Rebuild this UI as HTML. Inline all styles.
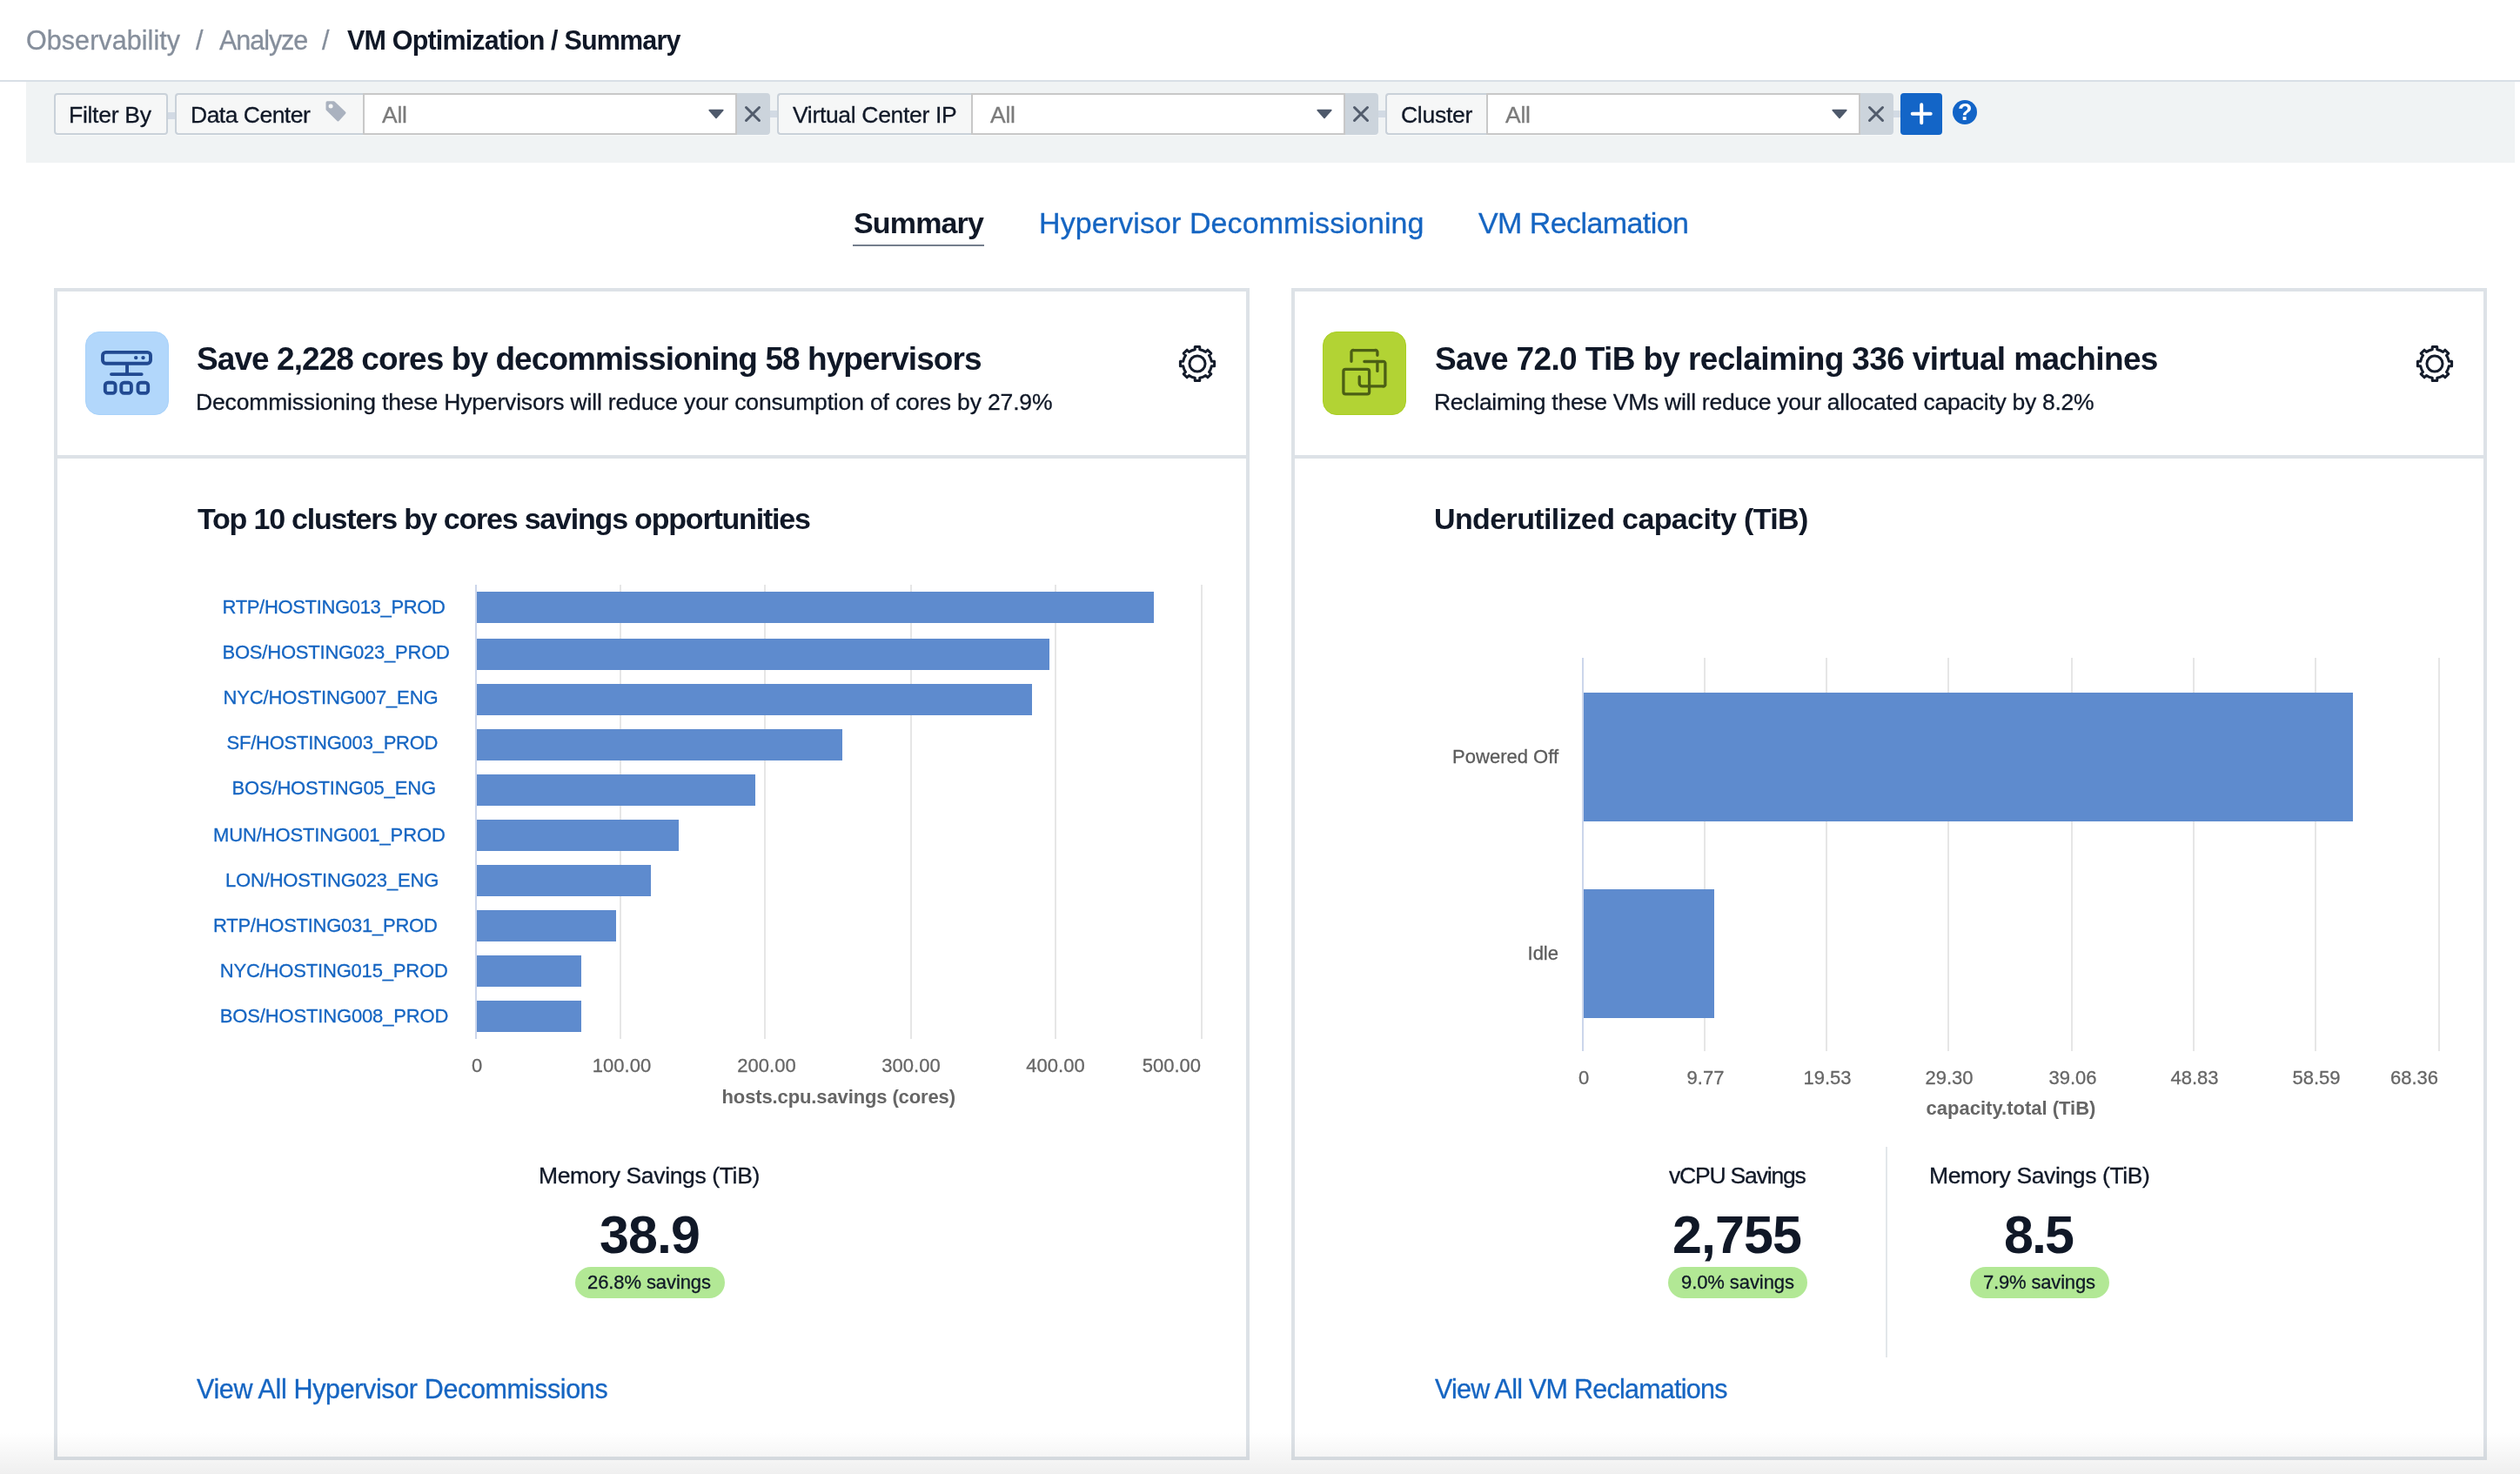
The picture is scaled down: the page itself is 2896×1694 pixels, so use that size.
<!DOCTYPE html>
<html lang="en">
<head>
<meta charset="utf-8">
<title>VM Optimization / Summary</title>
<style>
html,body{margin:0;padding:0;background:#fff;}
body{width:2896px;height:1694px;overflow:hidden;font-family:"Liberation Sans",Arial,Helvetica,sans-serif;}
#app{position:relative;width:2896px;height:1694px;overflow:hidden;background:#fff;}
.t{will-change:transform;position:absolute;white-space:nowrap;margin:0;font-weight:400;text-decoration:none;}
.abs{position:absolute;box-sizing:border-box;}
.topline{left:0;top:92px;width:2896px;height:2px;background:#d8dfe6;}
.filterbar{left:30px;top:94px;width:2860px;height:93px;background:#f0f3f4;}
.lbl{top:107px;height:48px;background:#f6f7f7;border:2px solid #c9d1d9;border-radius:4px;box-shadow:0 1px 0 rgba(255,255,255,.55);}
.lbl.j{border-right:none;border-radius:4px 0 0 4px;}
.sel{box-shadow:0 1px 0 rgba(255,255,255,.55);top:107px;height:48px;background:#fff;border:2px solid #c8c8c8;}
.xbtn{top:107px;height:48px;background:#ccd4dc;border-radius:0 4px 4px 0;box-shadow:0 1px 0 rgba(255,255,255,.55);}
.conn{top:127px;height:8px;background:#d2dae4;}
.plus{left:2184px;top:107px;width:48px;height:48px;background:#1365c7;border-radius:4px;}
.help{left:2244px;top:115px;width:28px;height:28px;border-radius:50%;background:#1264c7;}
.chart{position:absolute;overflow:visible;will-change:transform;}
.ico{position:absolute;overflow:visible;}
.tabline{left:980px;top:281px;width:151px;height:2px;background:#747e8c;}
.panel{top:331px;width:1374px;height:1347px;border:4px solid #dde2e7;background:#fff;}
.psep{height:4px;background:#dde2e7;top:523px;width:1366px;}
.iconbox{top:381px;width:96px;height:96px;border-radius:16px;border:1px solid transparent;}
.badge{top:1456px;height:36px;border-radius:18px;background:#b2e895;}
.vsep{left:2167px;top:1318px;width:2px;height:242px;background:#e3e7ea;}
.shade{left:0;top:1646px;width:2896px;height:48px;background:linear-gradient(to bottom,rgba(0,0,0,0) 0%,rgba(0,0,0,0.062) 100%);pointer-events:none;}
</style>
</head>
<body>
<div id="app">

<header>
  <nav class="breadcrumb">
    <a class="t" style="left:30.3px;top:30.9px;font-size:30.5px;line-height:30.5px;color:#858e9b;-webkit-text-stroke:0.3px;letter-spacing:0.06px;">Observability</a><span class="t" style="left:224.7px;top:30.9px;font-size:30.5px;line-height:30.5px;color:#858e9b;-webkit-text-stroke:0.3px;">/</span><a class="t" style="left:251.7px;top:30.9px;font-size:30.5px;line-height:30.5px;color:#858e9b;-webkit-text-stroke:0.3px;letter-spacing:-1.04px;">Analyze</a><span class="t" style="left:370.0px;top:30.9px;font-size:30.5px;line-height:30.5px;color:#858e9b;-webkit-text-stroke:0.3px;">/</span><h1 class="t" style="left:399.2px;top:30.9px;font-size:30.5px;line-height:30.5px;color:#101827;font-weight:700;letter-spacing:-0.83px;">VM Optimization / Summary</h1>
  </nav>
  <div class="abs topline"></div>
</header>

<section class="filters">
  <div class="abs filterbar"></div>

  <div class="abs lbl" style="left:62px;width:131px"></div>
  <span class="t" style="left:79.3px;top:118.8px;font-size:26.5px;line-height:26.5px;color:#101827;-webkit-text-stroke:0.3px;letter-spacing:-0.28px;">Filter By</span>
  <div class="abs conn" style="left:193px;width:8px;top:129px"></div>

  <div class="abs lbl j" style="left:201px;width:217px"></div>
  <span class="t" style="left:218.8px;top:118.8px;font-size:26.5px;line-height:26.5px;color:#101827;-webkit-text-stroke:0.3px;letter-spacing:-0.51px;">Data Center</span>
  <svg class="ico" style="left:370px;top:112px" width="32" height="32" viewBox="370 112 32 32"><path d="M376.100 117.900L383.560 117.900L395.870 129.680L388.530 137.790L376.100 125.630Z" fill="#aab2bf" stroke="#aab2bf" stroke-width="3.200" stroke-linejoin="round"/><circle cx="380.100" cy="122.100" r="2.500" fill="#f6f7f7"/></svg>
  <div class="abs sel" style="left:417px;width:430px"></div>
  <span class="t" style="left:439.0px;top:118.8px;font-size:26.5px;line-height:26.5px;color:#7b7b7b;-webkit-text-stroke:0.3px;letter-spacing:-0.28px;">All</span>
  <svg class="ico" style="left:813px;top:124px" width="20" height="14" viewBox="0 0 20 14"><path d="M2.2 2.6h15.6L10 11.4z" fill="#4e596b" stroke="#4e596b" stroke-width="1.6" stroke-linejoin="round"/></svg>
  <div class="abs xbtn" style="left:847px;width:38px"></div>
  <svg class="ico" style="left:855px;top:121px" width="20" height="20" viewBox="0 0 20 20"><path d="M2.5 2.5l15 15M17.5 2.5l-15 15" stroke="#515b6b" stroke-width="3" stroke-linecap="round" fill="none"/></svg>
  <div class="abs conn" style="left:885px;width:9px"></div>

  <div class="abs lbl j" style="left:893px;width:225px"></div>
  <span class="t" style="left:910.8px;top:118.8px;font-size:26.5px;line-height:26.5px;color:#101827;-webkit-text-stroke:0.3px;letter-spacing:-0.33px;">Virtual Center IP</span>
  <div class="abs sel" style="left:1116px;width:430px"></div>
  <span class="t" style="left:1138.3px;top:118.8px;font-size:26.5px;line-height:26.5px;color:#7b7b7b;-webkit-text-stroke:0.3px;letter-spacing:-0.28px;">All</span>
  <svg class="ico" style="left:1512px;top:124px" width="20" height="14" viewBox="0 0 20 14"><path d="M2.2 2.6h15.6L10 11.4z" fill="#4e596b" stroke="#4e596b" stroke-width="1.6" stroke-linejoin="round"/></svg>
  <div class="abs xbtn" style="left:1546px;width:38px"></div>
  <svg class="ico" style="left:1554px;top:121px" width="20" height="20" viewBox="0 0 20 20"><path d="M2.5 2.5l15 15M17.5 2.5l-15 15" stroke="#515b6b" stroke-width="3" stroke-linecap="round" fill="none"/></svg>
  <div class="abs conn" style="left:1584px;width:9px"></div>

  <div class="abs lbl j" style="left:1592px;width:118px"></div>
  <span class="t" style="left:1609.5px;top:118.8px;font-size:26.5px;line-height:26.5px;color:#101827;-webkit-text-stroke:0.3px;letter-spacing:-0.27px;">Cluster</span>
  <div class="abs sel" style="left:1708px;width:430px"></div>
  <span class="t" style="left:1730.0px;top:118.8px;font-size:26.5px;line-height:26.5px;color:#7b7b7b;-webkit-text-stroke:0.3px;letter-spacing:-0.28px;">All</span>
  <svg class="ico" style="left:2104px;top:124px" width="20" height="14" viewBox="0 0 20 14"><path d="M2.2 2.6h15.6L10 11.4z" fill="#4e596b" stroke="#4e596b" stroke-width="1.6" stroke-linejoin="round"/></svg>
  <div class="abs xbtn" style="left:2138px;width:38px"></div>
  <svg class="ico" style="left:2146px;top:121px" width="20" height="20" viewBox="0 0 20 20"><path d="M2.5 2.5l15 15M17.5 2.5l-15 15" stroke="#515b6b" stroke-width="3" stroke-linecap="round" fill="none"/></svg>
  <div class="abs conn" style="left:2176px;width:9px"></div>

  <div class="abs plus"></div>
  <svg class="ico" style="left:2194px;top:117px" width="28" height="28" viewBox="0 0 28 28"><path d="M14.2 3.3v21M3.7 13.8h21" stroke="#fff" stroke-width="4" stroke-linecap="round" fill="none"/></svg>
  <div class="abs help"></div>
  <span class="t" style="left:2250.3px;top:115px;font-size:27px;line-height:28px;font-weight:700;color:#fff;">?</span>
</section>

<nav class="tabs">
  <span class="t" style="left:980.5px;top:238.7px;font-size:34px;line-height:34px;color:#101827;font-weight:700;letter-spacing:-0.84px;">Summary</span>
  <div class="abs tabline"></div>
  <a class="t" style="left:1194.0px;top:238.7px;font-size:34px;line-height:34px;color:#1565c2;-webkit-text-stroke:0.3px;letter-spacing:0.09px;">Hypervisor Decommissioning</a>
  <a class="t" style="left:1698.8px;top:238.7px;font-size:34px;line-height:34px;color:#1565c2;-webkit-text-stroke:0.3px;letter-spacing:-0.58px;">VM Reclamation</a>
</nav>

<main>
<section class="abs panel" style="left:62px"></section>
<section class="card-left">
  <div class="abs psep" style="left:66px"></div>
  <div class="abs iconbox" style="left:98px;background:#b2d7fb;border-color:#a8d2fa"></div>
  <svg class="ico" style="left:98px;top:381px" width="96" height="96" viewBox="0 0 96 96" fill="none" stroke="#214991" stroke-width="3.9" stroke-linecap="round" stroke-linejoin="round">
    <rect x="20" y="23.900" width="55" height="12.800" rx="3.600"/>
    <path d="M48.050 38.700V49M30 49.100H64.700"/>
    <rect x="22.800" y="58.700" width="11.800" height="12.200" rx="3.200"/>
    <rect x="41.300" y="58.700" width="11.600" height="12.200" rx="3.200"/>
    <rect x="60.500" y="58.700" width="11.700" height="12.200" rx="3.200"/>
    <path d="M58.200 30.100h.01M66.500 30.100h.01" stroke-width="4.400"/>
  </svg>
  <h2 class="t" style="left:226.0px;top:393.5px;font-size:37px;line-height:37px;color:#101827;font-weight:700;letter-spacing:-0.93px;">Save 2,228 cores by decommissioning 58 hypervisors</h2>
  <p class="t" style="left:225.0px;top:448.8px;font-size:26.5px;line-height:26.5px;color:#101827;-webkit-text-stroke:0.3px;letter-spacing:-0.16px;">Decommissioning these Hypervisors will reduce your consumption of cores by 27.9%</p>
  <svg class="ico" style="left:1355px;top:397px" width="42" height="42" viewBox="0 0 42 42" fill="none" stroke="#141c2b" stroke-width="3" stroke-linejoin="round"><path d="M18.25 4.73L18.25 1.40L23.75 1.40L23.75 4.73A16.5 16.5 0 0 1 30.56 7.55L32.91 5.20L36.80 9.09L34.45 11.44A16.5 16.5 0 0 1 37.27 18.25L40.60 18.25L40.60 23.75L37.27 23.75A16.5 16.5 0 0 1 34.45 30.56L36.80 32.91L32.91 36.80L30.56 34.45A16.5 16.5 0 0 1 23.75 37.27L23.75 40.60L18.25 40.60L18.25 37.27A16.5 16.5 0 0 1 11.44 34.45L9.09 36.80L5.20 32.91L7.55 30.56A16.5 16.5 0 0 1 4.73 23.75L1.40 23.75L1.40 18.25L4.73 18.25A16.5 16.5 0 0 1 7.55 11.44L5.20 9.09L9.09 5.20L11.44 7.55A16.5 16.5 0 0 1 18.25 4.73Z"/><circle cx="21" cy="21" r="9.05"/></svg>
  <h3 class="t" style="left:227.0px;top:578.7px;font-size:34px;line-height:34px;color:#101827;font-weight:700;letter-spacing:-1.20px;">Top 10 clusters by cores savings opportunities</h3>
  <svg class="chart" style="left:200px;top:640px" width="1210" height="660" viewBox="200 640 1210 660" font-family="Liberation Sans, Arial, Helvetica, sans-serif">
<rect x="712" y="672" width="2" height="522" fill="#e6e6e6"/>
<rect x="878" y="672" width="2" height="522" fill="#e6e6e6"/>
<rect x="1046" y="672" width="2" height="522" fill="#e6e6e6"/>
<rect x="1212" y="672" width="2" height="522" fill="#e6e6e6"/>
<rect x="1380" y="672" width="2" height="522" fill="#e6e6e6"/>
<rect x="546" y="672" width="2" height="522" fill="#ccd6eb"/>
<rect x="548" y="680" width="778" height="36" fill="#5e8bce"/>
<rect x="548" y="734" width="658" height="36" fill="#5e8bce"/>
<rect x="548" y="786" width="638" height="36" fill="#5e8bce"/>
<rect x="548" y="838" width="420" height="36" fill="#5e8bce"/>
<rect x="548" y="890" width="320" height="36" fill="#5e8bce"/>
<rect x="548" y="942" width="232" height="36" fill="#5e8bce"/>
<rect x="548" y="994" width="200" height="36" fill="#5e8bce"/>
<rect x="548" y="1046" width="160" height="36" fill="#5e8bce"/>
<rect x="548" y="1098" width="120" height="36" fill="#5e8bce"/>
<rect x="548" y="1150" width="120" height="36" fill="#5e8bce"/>
<text x="255.5" y="705" font-size="22" fill="#1565c2" stroke="#1565c2" stroke-width="0.3" textLength="256.5" lengthAdjust="spacing">RTP/HOSTING013_PROD</text>
<text x="255.5" y="757" font-size="22" fill="#1565c2" stroke="#1565c2" stroke-width="0.3" textLength="261.5" lengthAdjust="spacing">BOS/HOSTING023_PROD</text>
<text x="256.5" y="808.8" font-size="22" fill="#1565c2" stroke="#1565c2" stroke-width="0.3" textLength="247.0" lengthAdjust="spacing">NYC/HOSTING007_ENG</text>
<text x="260.5" y="860.8" font-size="22" fill="#1565c2" stroke="#1565c2" stroke-width="0.3" textLength="243.0" lengthAdjust="spacing">SF/HOSTING003_PROD</text>
<text x="266.5" y="912.5" font-size="22" fill="#1565c2" stroke="#1565c2" stroke-width="0.3" textLength="234.5" lengthAdjust="spacing">BOS/HOSTING05_ENG</text>
<text x="245.0" y="966.8" font-size="22" fill="#1565c2" stroke="#1565c2" stroke-width="0.3" textLength="266.8" lengthAdjust="spacing">MUN/HOSTING001_PROD</text>
<text x="259.0" y="1018.8" font-size="22" fill="#1565c2" stroke="#1565c2" stroke-width="0.3" textLength="245.3" lengthAdjust="spacing">LON/HOSTING023_ENG</text>
<text x="245.0" y="1070.8" font-size="22" fill="#1565c2" stroke="#1565c2" stroke-width="0.3" textLength="257.8" lengthAdjust="spacing">RTP/HOSTING031_PROD</text>
<text x="252.8" y="1122.5" font-size="22" fill="#1565c2" stroke="#1565c2" stroke-width="0.3" textLength="262.0" lengthAdjust="spacing">NYC/HOSTING015_PROD</text>
<text x="252.8" y="1174.5" font-size="22" fill="#1565c2" stroke="#1565c2" stroke-width="0.3" textLength="262.5" lengthAdjust="spacing">BOS/HOSTING008_PROD</text>
<text x="548" y="1232" font-size="22" fill="#666666" stroke="#666666" stroke-width="0.3" text-anchor="middle">0</text>
<text x="714.5" y="1232" font-size="22" fill="#666666" stroke="#666666" stroke-width="0.3" text-anchor="middle">100.00</text>
<text x="881" y="1232" font-size="22" fill="#666666" stroke="#666666" stroke-width="0.3" text-anchor="middle">200.00</text>
<text x="1047" y="1232" font-size="22" fill="#666666" stroke="#666666" stroke-width="0.3" text-anchor="middle">300.00</text>
<text x="1213" y="1232" font-size="22" fill="#666666" stroke="#666666" stroke-width="0.3" text-anchor="middle">400.00</text>
<text x="1380" y="1232" font-size="22" fill="#666666" stroke="#666666" stroke-width="0.3" text-anchor="end">500.00</text>
<text x="829.5" y="1268" font-size="22" font-weight="700" fill="#666666" textLength="268.5">hosts.cpu.savings (cores)</text>
</svg>
  <span class="t" style="left:619.0px;top:1337.6px;font-size:26.5px;line-height:26.5px;color:#101827;-webkit-text-stroke:0.3px;letter-spacing:-0.36px;">Memory Savings (TiB)</span>
  <span class="t" style="left:689.0px;top:1389.4px;font-size:61px;line-height:61px;color:#101827;font-weight:700;letter-spacing:-0.93px;">38.9</span>
  <div class="abs badge" style="left:661px;width:172px"></div>
  <span class="t" style="left:675.0px;top:1463.2px;font-size:22px;line-height:22px;color:#101827;-webkit-text-stroke:0.3px;letter-spacing:-0.09px;">26.8% savings</span>
  <a class="t" style="left:226.0px;top:1580.7px;font-size:30.5px;line-height:30.5px;color:#1565c2;-webkit-text-stroke:0.3px;letter-spacing:-0.36px;">View All Hypervisor Decommissions</a>
</section>

<section class="abs panel" style="left:1484px"></section>
<section class="card-right">
  <div class="abs psep" style="left:1488px"></div>
  <div class="abs iconbox" style="left:1520px;background:#b2d334;border-color:#a9cf22"></div>
  <svg class="ico" style="left:1520px;top:381px" width="96" height="96" viewBox="0 0 96 96" fill="none" stroke="#4b5f14" stroke-width="3.3" stroke-linecap="round" stroke-linejoin="round">
    <path d="M33 34.300V24.600a2.400 2.400 0 0 1 3 -3H59.900a2.400 2.400 0 0 1 3 3V27.300"/>
    <path d="M47.900 34.500H68.900a2.400 2.400 0 0 1 3 3V59.900a2.400 2.400 0 0 1 -3 3H45.700a3.500 3.500 0 0 1 -3.500 -3.500V51.800"/>
    <path d="M62.900 34.500V45.400"/>
    <rect x="23.900" y="43.300" width="29.700" height="28.600" rx="2.400"/>
  </svg>
  <h2 class="t" style="left:1648.5px;top:393.5px;font-size:37px;line-height:37px;color:#101827;font-weight:700;letter-spacing:-0.63px;">Save 72.0 TiB by reclaiming 336 virtual machines</h2>
  <p class="t" style="left:1647.5px;top:448.8px;font-size:26.5px;line-height:26.5px;color:#101827;-webkit-text-stroke:0.3px;letter-spacing:-0.28px;">Reclaiming these VMs will reduce your allocated capacity by 8.2%</p>
  <svg class="ico" style="left:2777px;top:397px" width="42" height="42" viewBox="0 0 42 42" fill="none" stroke="#141c2b" stroke-width="3" stroke-linejoin="round"><path d="M18.25 4.73L18.25 1.40L23.75 1.40L23.75 4.73A16.5 16.5 0 0 1 30.56 7.55L32.91 5.20L36.80 9.09L34.45 11.44A16.5 16.5 0 0 1 37.27 18.25L40.60 18.25L40.60 23.75L37.27 23.75A16.5 16.5 0 0 1 34.45 30.56L36.80 32.91L32.91 36.80L30.56 34.45A16.5 16.5 0 0 1 23.75 37.27L23.75 40.60L18.25 40.60L18.25 37.27A16.5 16.5 0 0 1 11.44 34.45L9.09 36.80L5.20 32.91L7.55 30.56A16.5 16.5 0 0 1 4.73 23.75L1.40 23.75L1.40 18.25L4.73 18.25A16.5 16.5 0 0 1 7.55 11.44L5.20 9.09L9.09 5.20L11.44 7.55A16.5 16.5 0 0 1 18.25 4.73Z"/><circle cx="21" cy="21" r="9.05"/></svg>
  <h3 class="t" style="left:1647.5px;top:578.7px;font-size:34px;line-height:34px;color:#101827;font-weight:700;letter-spacing:-0.62px;">Underutilized capacity (TiB)</h3>
  <svg class="chart" style="left:1640px;top:740px" width="1200" height="570" viewBox="1640 740 1200 570" font-family="Liberation Sans, Arial, Helvetica, sans-serif">
<rect x="1958" y="756" width="2" height="452" fill="#e6e6e6"/>
<rect x="2098" y="756" width="2" height="452" fill="#e6e6e6"/>
<rect x="2238" y="756" width="2" height="452" fill="#e6e6e6"/>
<rect x="2380" y="756" width="2" height="452" fill="#e6e6e6"/>
<rect x="2520" y="756" width="2" height="452" fill="#e6e6e6"/>
<rect x="2660" y="756" width="2" height="452" fill="#e6e6e6"/>
<rect x="2802" y="756" width="2" height="452" fill="#e6e6e6"/>
<rect x="1818" y="756" width="2" height="452" fill="#ccd6eb"/>
<rect x="1820" y="796" width="884" height="148" fill="#5e8bce"/>
<rect x="1820" y="1022" width="150" height="148" fill="#5e8bce"/>
<text x="1791" y="876.8" font-size="22" fill="#5c5c5c" stroke="#5c5c5c" stroke-width="0.3" text-anchor="end">Powered Off</text>
<text x="1791" y="1103" font-size="22" fill="#5c5c5c" stroke="#5c5c5c" stroke-width="0.3" text-anchor="end">Idle</text>
<text x="1820" y="1246" font-size="22" fill="#666666" stroke="#666666" stroke-width="0.3" text-anchor="middle">0</text>
<text x="1960" y="1246" font-size="22" fill="#666666" stroke="#666666" stroke-width="0.3" text-anchor="middle">9.77</text>
<text x="2100" y="1246" font-size="22" fill="#666666" stroke="#666666" stroke-width="0.3" text-anchor="middle">19.53</text>
<text x="2240" y="1246" font-size="22" fill="#666666" stroke="#666666" stroke-width="0.3" text-anchor="middle">29.30</text>
<text x="2382" y="1246" font-size="22" fill="#666666" stroke="#666666" stroke-width="0.3" text-anchor="middle">39.06</text>
<text x="2522" y="1246" font-size="22" fill="#666666" stroke="#666666" stroke-width="0.3" text-anchor="middle">48.83</text>
<text x="2662" y="1246" font-size="22" fill="#666666" stroke="#666666" stroke-width="0.3" text-anchor="middle">58.59</text>
<text x="2802" y="1246" font-size="22" fill="#666666" stroke="#666666" stroke-width="0.3" text-anchor="end">68.36</text>
<text x="2311" y="1281" font-size="22" font-weight="700" fill="#666666" text-anchor="middle">capacity.total (TiB)</text>
</svg>
  <span class="t" style="left:1918.0px;top:1337.6px;font-size:26.5px;line-height:26.5px;color:#101827;-webkit-text-stroke:0.3px;letter-spacing:-1.19px;">vCPU Savings</span>
  <span class="t" style="left:1921.8px;top:1389.4px;font-size:61px;line-height:61px;color:#101827;font-weight:700;letter-spacing:-0.93px;">2,755</span>
  <div class="abs badge" style="left:1917px;width:160px"></div>
  <span class="t" style="left:1931.5px;top:1463.2px;font-size:22px;line-height:22px;color:#101827;-webkit-text-stroke:0.3px;letter-spacing:-0.08px;">9.0% savings</span>
  <div class="abs vsep"></div>
  <span class="t" style="left:2216.8px;top:1337.6px;font-size:26.5px;line-height:26.5px;color:#101827;-webkit-text-stroke:0.3px;letter-spacing:-0.38px;">Memory Savings (TiB)</span>
  <span class="t" style="left:2302.8px;top:1389.4px;font-size:61px;line-height:61px;color:#101827;font-weight:700;letter-spacing:-1.94px;">8.5</span>
  <div class="abs badge" style="left:2264px;width:160px"></div>
  <span class="t" style="left:2279.0px;top:1463.2px;font-size:22px;line-height:22px;color:#101827;-webkit-text-stroke:0.3px;letter-spacing:-0.17px;">7.9% savings</span>
  <a class="t" style="left:1649.0px;top:1580.7px;font-size:30.5px;line-height:30.5px;color:#1565c2;-webkit-text-stroke:0.3px;letter-spacing:-0.75px;">View All VM Reclamations</a>
</section>
</main>

<div class="abs shade"></div>
</div>
</body>
</html>
